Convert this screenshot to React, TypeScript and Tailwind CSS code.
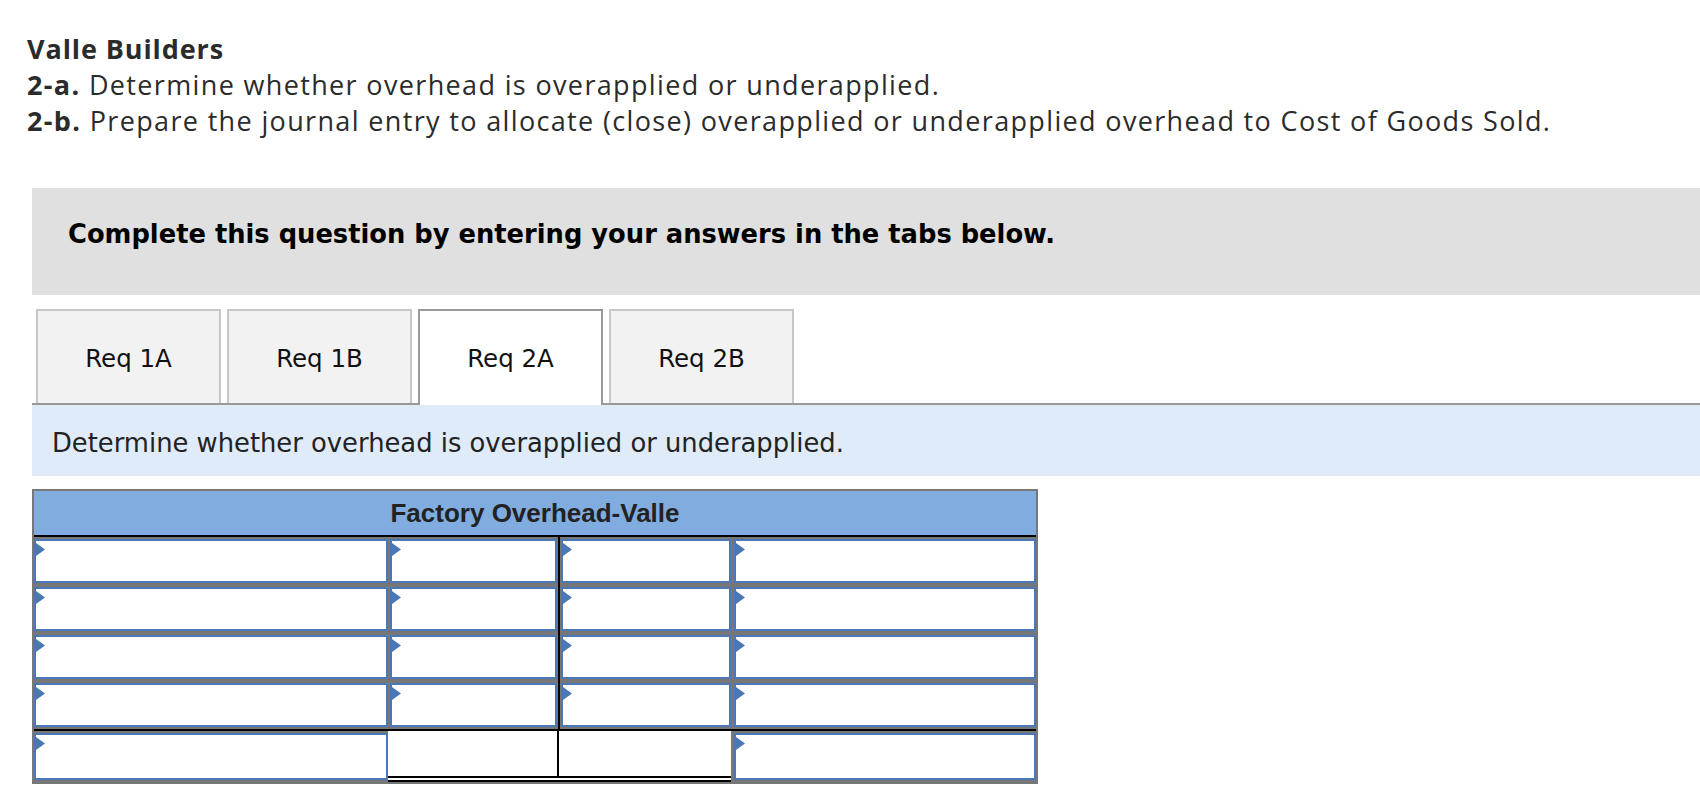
import React from 'react'

const tabs = ['Req 1A', 'Req 1B', 'Req 2A', 'Req 2B']

function Flag() {
  return (
    <svg className="absolute left-0 top-[2px]" width="9" height="13" viewBox="0 0 9 13">
      <polygon points="0,0 9,6.5 0,13" fill="#4a77b5" />
    </svg>
  )
}

function Cell({ className }: { className: string }) {
  return (
    <div className={`relative my-[2px] border-2 border-[#4a77b5] bg-white ${className}`}>
      <Flag />
    </div>
  )
}

// black T-account divider between debit and credit columns
function Divider() {
  return (
    <div className="flex w-[4px] justify-center">
      <div className="w-[2px] bg-black" />
    </div>
  )
}

export default function App() {
  return (
    <div className="min-h-screen bg-white pb-[13px]">
      {/* heading */}
      <div className="pl-[27px] pt-[31px] font-['Open_Sans',sans-serif] text-[27px] leading-[36px] tracking-[1.35px] text-[#2b2b2b]">
        <p className="font-bold tracking-[0.9px]">Valle Builders</p>
        <p>
          <span className="font-bold">2-a.</span> Determine whether overhead is overapplied or underapplied.
        </p>
        <p>
          <span className="font-bold">2-b.</span> Prepare the journal entry to allocate (close) overapplied or
          underapplied overhead to Cost of Goods Sold.
        </p>
      </div>

      <div className="ml-[32px] font-['DejaVu_Sans',Verdana,sans-serif]">
        {/* instructions box */}
        <div className="mt-[49px] h-[107px] bg-[#e0e0e0] pl-[36px] pt-[31px]">
          <p className="text-[25.75px] font-bold leading-[30px] text-black">
            Complete this question by entering your answers in the tabs below.
          </p>
        </div>

        {/* tabs */}
        <div className="mt-[14px] flex gap-[6px] border-b-2 border-[#999] pl-[4px]">
          {tabs.map((t, i) =>
            i === 2 ? (
              <div
                key={t}
                className="-mb-[2px] flex h-[96px] w-[185px] items-center justify-center border-2 border-b-0 border-[#999] bg-white pt-[2px] text-[24.5px] text-[#111]"
              >
                {t}
              </div>
            ) : (
              <div
                key={t}
                className="flex h-[94px] w-[185px] items-center justify-center border-2 border-b-0 border-[#c6c6c6] bg-[#f2f2f2] pt-[4px] text-[24.5px] text-[#111]"
              >
                {t}
              </div>
            )
          )}
        </div>

        {/* prompt band */}
        <div className="flex h-[71px] items-center bg-[#dfebf8] pl-[20px] pt-[5px]">
          <p className="text-[25.8px] text-[#222]">Determine whether overhead is overapplied or underapplied.</p>
        </div>

        {/* T-account */}
        <div className="mt-[13px] w-[1006px] border-2 border-[#777]">
          <div className="flex h-[46px] items-center justify-center border-b-2 border-black bg-[#80acdf] font-['Liberation_Sans',Arial,sans-serif] text-[26px] font-bold text-[#222]">
            Factory Overhead-Valle
          </div>

          {[0, 1, 2, 3].map(r => (
            <div key={r} className="flex h-[48px] bg-[#777]">
              <Cell className="w-[354px]" />
              <div className="w-[2px]" />
              <Cell className="w-[167px]" />
              <Divider />
              <Cell className="w-[170px]" />
              <div className="w-[3px]" />
              <Cell className="flex-1" />
            </div>
          ))}

          <div className="flex h-[53px] border-t-2 border-black bg-[#777]">
            <Cell className="w-[354px]" />
            <div className="flex w-[343px] border-b-[6px] border-double border-black bg-white">
              <div className="flex-1" />
              <div className="w-[2px] bg-black" />
              <div className="w-[172px]" />
            </div>
            <div className="w-[3px]" />
            <Cell className="flex-1" />
          </div>
        </div>
      </div>
    </div>
  )
}
